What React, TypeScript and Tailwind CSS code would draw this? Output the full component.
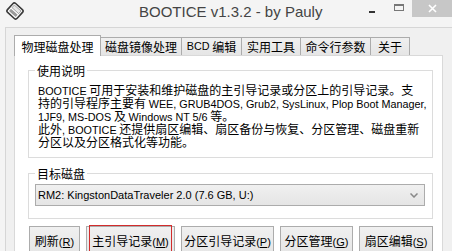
import React from 'react';

// Latin runs use a narrower face than the CJK text around them
const L: React.FC<{ children: React.ReactNode }> = ({ children }) => (
  <span className="font-['Liberation_Sans',sans-serif] text-[10.8px] leading-none">{children}</span>
);

const TABS = [
  { label: '物理磁盘处理', w: 'w-[87px]', active: true },
  { label: '磁盘镜像处理', w: 'w-[82px]', active: false },
  { label: 'BCD 编辑', w: 'w-[61px]', active: false },
  { label: '实用工具', w: 'w-[60px]', active: false },
  { label: '命令行参数', w: 'w-[71px]', active: false },
  { label: '关于', w: 'w-[40px]', active: false },
];

const BUTTONS = [
  { label: '刷新', key: 'R', w: 'w-[51px]' },
  { label: '主引导记录', key: 'M', w: 'w-[89px]', marked: true },
  { label: '分区引导记录', key: 'P', w: 'w-[93px]' },
  { label: '分区管理', key: 'G', w: 'w-[73px]' },
  { label: '扇区编辑', key: 'S', w: 'w-[74px]' },
];

const AppIcon = () => (
  <svg width="20" height="18" viewBox="0 0 20 18">
    <g transform="rotate(42 10 9)">
      <rect x="3.5" y="3" width="13" height="12" rx="2" fill="#fff" stroke="#3a3a3a" strokeWidth="1.6" />
      <rect x="5.5" y="10" width="9" height="3" fill="#9a9a9a" />
      <rect x="5.5" y="5" width="9" height="3.5" fill="#e6e6e6" stroke="#777" strokeWidth="0.6" />
    </g>
  </svg>
);

const Line: React.FC<{ children: React.ReactNode }> = ({ children }) => (
  <div className="h-[13px] leading-[13px] whitespace-nowrap">{children}</div>
);

const App: React.FC = () => {
  return (
    <div className="w-[452px] h-[251px] overflow-hidden bg-[#f4f4f4] flex flex-col font-['Noto_Sans_CJK_SC',sans-serif] text-[12px] text-black">
      {/* title bar */}
      <div className="h-[27px] flex items-start shrink-0">
        <div className="w-[139px] pl-[5px] pt-[2px]">
          <AppIcon />
        </div>
        <div className="pt-[3px] font-['Liberation_Sans',sans-serif] text-[15px] leading-[18px] text-[#444]">
          BOOTICE v1.3.2 - by Pauly
        </div>
        <div className="flex-1" />
        <div className="w-[6px] h-[2px] bg-[#333] mt-[11px]" />
        <div className="w-[10px] h-[7px] border border-[#777] border-t-2 ml-[19px] mt-[4px]" />
        <div className="w-[40px] h-[17px] bg-[#c7c7c7] ml-[8px] flex items-center justify-center">
          <svg width="9" height="9" viewBox="0 0 9 9">
            <path d="M1 1 L8 8 M8 1 L1 8" stroke="#fff" strokeWidth="1.6" />
          </svg>
        </div>
      </div>

      {/* client area */}
      <div className="flex-1 ml-[5px] border-l border-t border-[#d6d6d6] bg-[#f0f0f0] pl-[8px] pt-[7px]">
        <div className="flex items-end h-[20px]">
          {TABS.map(t =>
            t.active ? (
              <div
                key={t.label}
                className={`${t.w} h-[21px] -mb-px relative z-10 bg-white border border-b-0 border-[#acacac] flex items-center justify-center leading-[13px]`}
              >
                {t.label}
              </div>
            ) : (
              <div
                key={t.label}
                className={`${t.w} h-[18px] -ml-px bg-gradient-to-b from-[#f0f0f0] to-[#e5e5e5] border border-b-0 border-[#acacac] flex items-center justify-center leading-[13px]`}
              >
                {t.label.startsWith('BCD') ? (
                  <>
                    <L>BCD</L>&nbsp;编辑
                  </>
                ) : (
                  t.label
                )}
              </div>
            )
          )}
        </div>

        <div className="w-[429px] h-[220px] border border-[#d9d9d9] bg-white pl-[13px] pr-[9px] pt-[8px]">
          <fieldset className="border border-[#dcdcdc] pl-[9px] pt-[6px] pb-[9px]">
            <legend className="px-[2px] -ml-[3px] leading-[13px]">使用说明</legend>
            <Line>
              <L>BOOTICE</L> 可用于安装和维护磁盘的主引导记录或分区上的引导记录。支
            </Line>
            <Line>
              持的引导程序主要有 <L>WEE, GRUB4DOS, Grub2, SysLinux, Plop Boot Manager,</L>
            </Line>
            <Line>
              <L>1JF9, MS-DOS</L> 及 <L>Windows NT 5/6</L> 等。
            </Line>
            <Line>
              此外<L>, BOOTICE</L> 还提供扇区编辑、扇区备份与恢复、分区管理、磁盘重新
            </Line>
            <Line>分区以及分区格式化等功能。</Line>
          </fieldset>

          <fieldset className="mt-[9px] border border-[#dcdcdc] pl-[6px] pt-[4px] pb-[12px]">
            <legend className="px-[2px] leading-[13px]">目标磁盘</legend>
            <div className="w-[390px] h-[22px] border border-[#acacac] bg-gradient-to-b from-[#f0f0f0] to-[#e5e5e5] flex items-center pl-[2px] pr-[6px]">
              <span className="flex-1 font-['Liberation_Sans',sans-serif] text-[11px]">
                RM2: KingstonDataTraveler 2.0 (7.6 GB, U:)
              </span>
              <svg width="8" height="5" viewBox="0 0 8 5">
                <path d="M0.5 0.5 L4 4 L7.5 0.5" fill="none" stroke="#888" strokeWidth="1.5" />
              </svg>
            </div>
          </fieldset>

          <div className="flex gap-[6px] mt-[7px] pl-[1px]">
            {BUTTONS.map(b => (
              <div
                key={b.key}
                className={`${b.w} h-[30px] relative border border-[#acacac] bg-gradient-to-b from-[#f0f0f0] to-[#e5e5e5] flex items-start justify-center pt-[6px] leading-[16px]`}
              >
                <span>
                  {b.label}
                  <span className="font-['Liberation_Sans',sans-serif] text-[11px]">
                    (<span className="underline">{b.key}</span>)
                  </span>
                </span>
                {b.marked && (
                  <div className="absolute left-[2px] right-[2px] -top-[2px] bottom-0 border border-[#d22c2c]" />
                )}
              </div>
            ))}
          </div>
        </div>
      </div>
    </div>
  );
};

export default App;
